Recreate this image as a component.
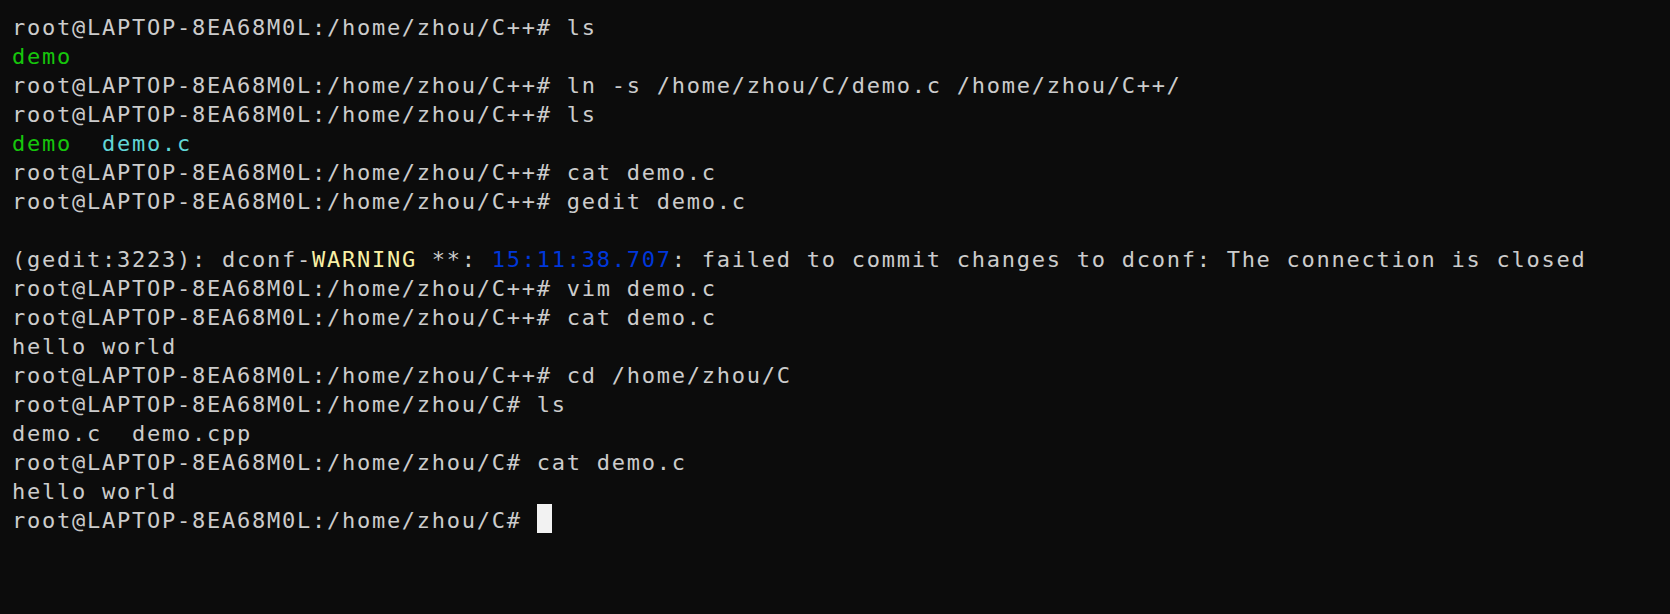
import React from "react";

type Seg = { t: string; c?: string };

const P = "root@LAPTOP-8EA68M0L:/home/zhou/";

const lines: Seg[][] = [
  [{ t: P + "C++# ls" }],
  [{ t: "demo", c: "text-[#16c60c]" }],
  [{ t: P + "C++# ln -s /home/zhou/C/demo.c /home/zhou/C++/" }],
  [{ t: P + "C++# ls" }],
  [
    { t: "demo", c: "text-[#16c60c]" },
    { t: "  " },
    { t: "demo.c", c: "text-[#61d6d6]" },
  ],
  [{ t: P + "C++# cat demo.c" }],
  [{ t: P + "C++# gedit demo.c" }],
  [{ t: "" }],
  [
    { t: "(gedit:3223): dconf-" },
    { t: "WARNING", c: "text-[#f9f1a5]" },
    { t: " **: " },
    { t: "15:11:38.707", c: "text-[#0037da]" },
    { t: ": failed to commit changes to dconf: The connection is closed" },
  ],
  [{ t: P + "C++# vim demo.c" }],
  [{ t: P + "C++# cat demo.c" }],
  [{ t: "hello world" }],
  [{ t: P + "C++# cd /home/zhou/C" }],
  [{ t: P + "C# ls" }],
  [{ t: "demo.c  demo.cpp" }],
  [{ t: P + "C# cat demo.c" }],
  [{ t: "hello world" }],
];

export default function App() {
  return (
    <div
      className="w-[1670px] h-[614px] bg-[#0c0c0c] text-[#cccccc] overflow-hidden pl-[12px] pt-[13px] text-[22px] leading-[29px] tracking-[1.75px] whitespace-pre"
      style={{ fontFamily: '"DejaVu Sans Mono", monospace' }}
    >
      {lines.map((segs, i) => (
        <div key={i} className="h-[29px]">
          {segs.map((s, j) => (
            <span key={j} className={s.c}>
              {s.t}
            </span>
          ))}
        </div>
      ))}
      <div className="h-[29px]">
        <span>{P + "C# "}</span>
        <span className="inline-block w-[15px] h-[29px] align-top bg-[#f2f2f2] relative -top-[2px]" />
      </div>
    </div>
  );
}
